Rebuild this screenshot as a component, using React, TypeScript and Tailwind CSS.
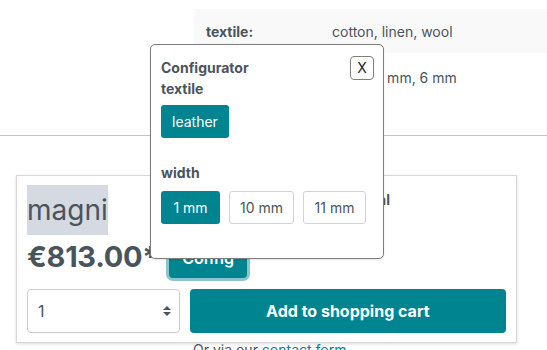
import React from "react";

const teal = "bg-[#008490]";

export default function App() {
  return (
    <div className="relative w-[547px] h-[350px] overflow-hidden bg-white text-[#4a545b] font-['Inter','Liberation_Sans',sans-serif]">
      {/* Properties table */}
      <div className="ml-[194px] pt-[9px] text-[14px]">
        <div className="flex h-[44px] items-center bg-[#f9f9f9] px-[12px]">
          <span className="w-[126px] font-bold">textile:</span>
          <span>cotton, linen, wool</span>
        </div>
        <div className="flex h-[48px] items-center px-[12px]">
          <span className="w-[126px] font-bold">width:</span>
          <span>1 mm, 4 mm, 6 mm</span>
        </div>
      </div>

      <div className="mt-[34px] h-px bg-[#c4c4c4]" />

      {/* Buy box card */}
      <div className="mx-[16px] mt-[39px] w-[501px] border border-[#d8d8d8] shadow-[0_1px_3px_rgba(0,0,0,0.15)] px-[10px] pt-[9px] pb-[9px]">
        <div className="flex">
          <div className="w-[307px]">
            <span className="bg-[#d5d9e1] text-[28px] leading-[50px] inline-block">magni</span>
          </div>
          <div className="pt-[4px] text-[14px] font-bold">Material</div>
        </div>
        <div className="flex items-center mt-[1px]">
          <span className="text-[29px] font-bold leading-[38px] tracking-[-0.3px]">€813.00*</span>
          <button className={`ml-[11px] h-[40px] w-[78px] rounded-[4px] ${teal} text-white text-[16px] font-semibold ring-[3px] ring-[#8cc6cb] mt-[2px]`}>
            Config
          </button>
        </div>
        <div className="flex gap-[10px] mt-[11px]">
          <div className="flex h-[44px] w-[153px] items-center justify-between rounded-[4px] border border-[#c8ccd0] pl-[10px] pr-[7px] text-[16px]">
            <span>1</span>
            <svg width="10" height="12" viewBox="0 0 10 12">
              <path d="M1 5 L5 1 L9 5 Z" fill="#4a545b" />
              <path d="M1 7 L5 11 L9 7 Z" fill="#4a545b" />
            </svg>
          </div>
          <button className={`h-[44px] w-[317px] rounded-[4px] ${teal} text-white text-[16px] font-bold`}>
            Add to shopping cart
          </button>
        </div>
      </div>
      <div className="ml-[193px] -mt-[1px] text-[14px] leading-[16px]">
        Or via our <span className="text-[#008490] underline">contact form</span>
      </div>

      {/* Configurator popover */}
      <div className="absolute left-[150px] top-[44px] w-[234px] h-[215px] rounded-[5px] border border-[#7d7d7d] bg-white px-[10px] pt-[12px] shadow-[0_1px_2px_rgba(0,0,0,0.1)]">
        <div className="flex justify-between">
          <div className="text-[14px] font-bold leading-[21px]">
            Configurator
            <br />
            textile
          </div>
          <button className="h-[24px] w-[24px] rounded-[4px] border border-[#7d7d7d] text-[14px] text-[#222] leading-none -mt-[1px] -mr-[1px]">
            X
          </button>
        </div>
        <button className={`mt-[6px] h-[33px] px-[11px] rounded-[3px] ${teal} text-white text-[14px]`}>
          leather
        </button>
        <div className="mt-[24px] text-[14px] font-bold leading-[21px]">width</div>
        <div className="mt-[8px] flex gap-[9px]">
          <button className={`h-[33px] w-[59px] rounded-[3px] ${teal} text-white text-[14px]`}>1 mm</button>
          <button className="h-[33px] w-[65px] rounded-[3px] border border-[#ced4da] text-[14px]">10 mm</button>
          <button className="h-[33px] w-[63px] rounded-[3px] border border-[#ced4da] text-[14px]">11 mm</button>
        </div>
      </div>
    </div>
  );
}
